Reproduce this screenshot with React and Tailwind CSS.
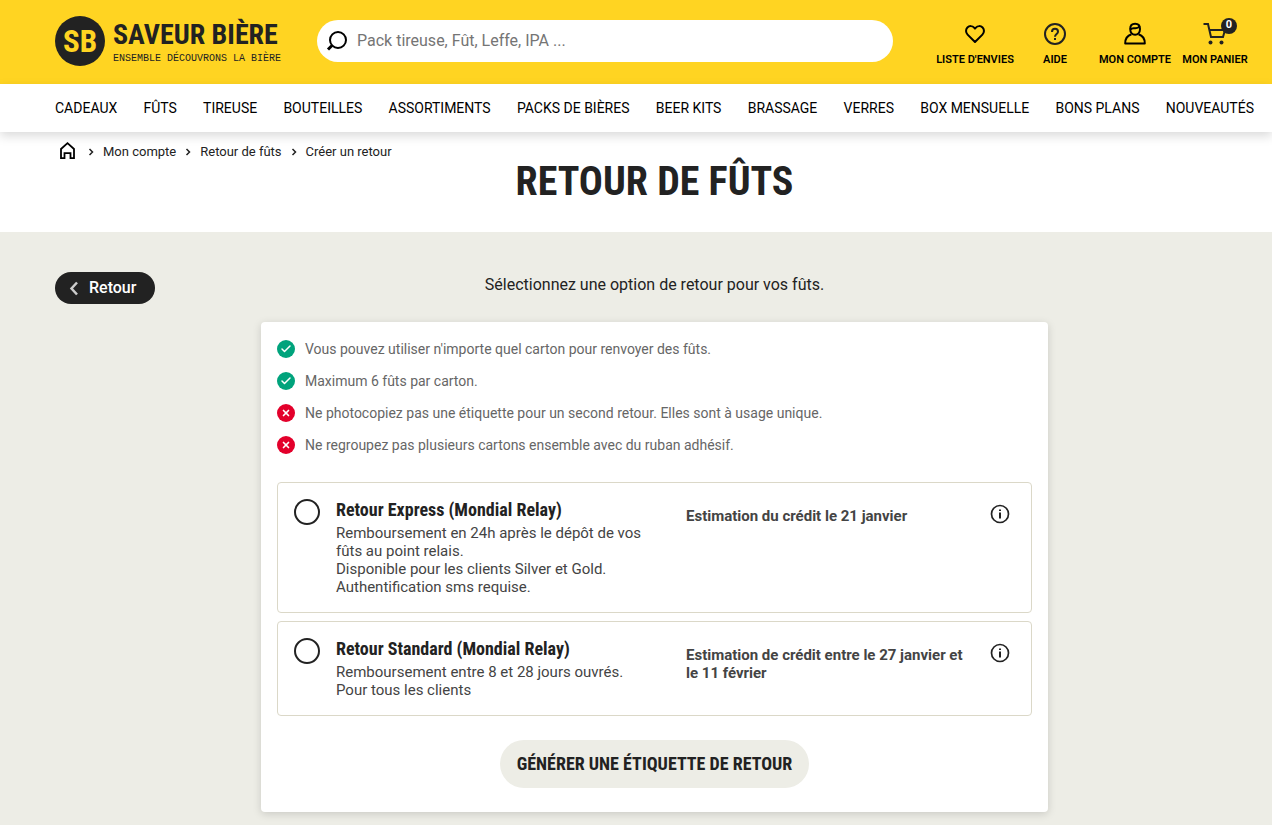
import { useState } from "react";
import { Check, X } from "lucide-react";

const menu = [
  "Cadeaux", "Fûts", "Tireuse", "Bouteilles", "Assortiments", "Packs de bières",
  "Beer kits", "Brassage", "Verres", "Box mensuelle", "Bons plans", "Nouveautés",
];

const rules = [
  { ok: true, text: "Vous pouvez utiliser n'importe quel carton pour renvoyer des fûts." },
  { ok: true, text: "Maximum 6 fûts par carton." },
  { ok: false, text: "Ne photocopiez pas une étiquette pour un second retour. Elles sont à usage unique." },
  { ok: false, text: "Ne regroupez pas plusieurs cartons ensemble avec du ruban adhésif." },
];

const options = [
  {
    id: "express",
    title: "Retour Express (Mondial Relay)",
    lines: [
      "Remboursement en 24h après le dépôt de vos fûts au point relais.",
      "Disponible pour les clients Silver et Gold.",
      "Authentification sms requise.",
    ],
    estimate: "Estimation du crédit le 21 janvier",
  },
  {
    id: "standard",
    title: "Retour Standard (Mondial Relay)",
    lines: ["Remboursement entre 8 et 28 jours ouvrés.", "Pour tous les clients"],
    estimate: "Estimation de crédit entre le 27 janvier et le 11 février",
  },
];

function HeartIcon() {
  return (
    <svg width="24" height="24" viewBox="0 0 24 24" fill="none" stroke="black" strokeWidth="2" strokeLinejoin="round">
      <path d="M12 20 4.600 12.600C2.600 10.600 2.500 7.400 4.400 5.500c1.900-1.900 5-1.800 6.700.1l.9 1 .9-1c1.700-1.900 4.800-2 6.700-.1 1.900 1.900 1.800 5.100-.2 7.100Z" />
    </svg>
  );
}

function HelpIcon() {
  return (
    <svg width="24" height="24" viewBox="0 0 24 24" fill="none" stroke="#222" strokeWidth="2">
      <circle cx="12" cy="12" r="10" />
      <path d="M9 10c0-2 1.300-3.200 3-3.200s3 1.200 3 2.900c0 2.200-3 2.500-3 5.100M12 16v2" />
    </svg>
  );
}

function UserIcon() {
  return (
    <svg width="24" height="24" viewBox="0 0 24 24" fill="none" stroke="black" strokeWidth="2" strokeLinejoin="round">
      <path d="M7.200 7c0-3.400 2-5.200 4.900-5.200S17 3.700 17 7s-2 5.800-4.900 5.800S7.200 10.300 7.200 7Z" />
      <path d="M7.300 7.500c1.600-1.700 3-1.300 4.700-1.200 1.900.1 3.300-.1 4.500-2" />
      <path d="M8.500 12.300C4.500 13.500 2.200 16 2.200 21.500h19.600c0-5.500-2.300-8-6.300-9.200" />
    </svg>
  );
}

function CartIcon() {
  return (
    <svg width="24" height="24" viewBox="0 0 24 24" fill="none" stroke="#222" strokeWidth="2">
      <path d="M.5 2H5l3 13h12L22 8H6.500" />
      <circle cx="7.500" cy="20.500" r="2" fill="#222" stroke="none" />
      <circle cx="18.500" cy="20.500" r="2" fill="#222" stroke="none" />
    </svg>
  );
}

function Chevron() {
  return (
    <svg className="mx-[9px]" width="6" height="8" viewBox="0 0 6 8" fill="none" stroke="#222" strokeWidth="1.500">
      <path d="m1.500 1 3 3-3 3" />
    </svg>
  );
}

function HeaderLink({ icon, label, badge }) {
  return (
    <a href="#" className="flex w-20 flex-col items-center gap-2 text-black">
      <span className="relative">
        {icon}
        {badge && (
          <span className="absolute -top-1 -right-[10px] flex size-4 items-center justify-center rounded-full bg-[#222] text-[11px] font-bold text-white">
            {badge}
          </span>
        )}
      </span>
      <span className="text-[11px] leading-3 font-semibold whitespace-nowrap uppercase">{label}</span>
    </a>
  );
}

function Logo() {
  return (
    <a href="#" aria-label="Saveur Bière" className="flex shrink-0 items-center gap-2 text-[#222]">
      <svg width="50" height="50" viewBox="0 0 50 50">
        <circle cx="25" cy="25" r="25" fill="#222" />
        <text x="25" y="36" textAnchor="middle" fontSize="31" fontWeight="700" fill="#ffd422" className="font-['Roboto_Condensed','Roboto',sans-serif]">
          SB
        </text>
      </svg>
      <span className="flex flex-col">
        <span className="font-['Roboto_Condensed','Roboto',sans-serif] text-[28px] leading-9 font-bold">SAVEUR BIÈRE</span>
        <span className="font-['Liberation_Mono',monospace] text-[10px] leading-3">ENSEMBLE DÉCOUVRONS LA BIÈRE</span>
      </span>
    </a>
  );
}

function ReturnOption({ option, checked, onChange }) {
  return (
    <div className="grid grid-cols-[26px_167fr_144fr_20px] gap-x-4 rounded border border-[#dbd8c8] py-4 pr-[21px] pl-4">
      <input
        type="radio"
        id={option.id}
        name="return-option"
        checked={checked}
        onChange={onChange}
        className="size-[26px] appearance-none rounded-full border-2 border-[#222] checked:border-8"
      />
      <label htmlFor={option.id} className="pr-4">
        <span className="mb-[3px] block font-['Roboto_Condensed','Roboto',sans-serif] text-lg leading-[22px] font-bold text-[#222]">
          {option.title}
        </span>
        {option.lines.map((line) => (
          <span key={line} className="block text-[15px] leading-[18px] text-[#444]">{line}</span>
        ))}
      </label>
      <p className="pt-2 text-[15px] leading-[18px] font-bold text-[#444]">{option.estimate}</p>
      <button type="button" aria-label="Informations" className="mt-[5px] size-5">
        <svg width="20" height="20" viewBox="0 0 20 20" fill="none" stroke="#222">
          <circle cx="10" cy="10" r="8.500" strokeWidth="1.700" />
          <path d="M10 8.500V14.500M10 5.500v1.500" strokeWidth="2" />
        </svg>
      </button>
    </div>
  );
}

export default function App() {
  const [selected, setSelected] = useState(null);

  return (
    <div className="flex min-h-screen flex-col bg-white font-['Roboto',sans-serif] text-[#222]">
      <header className="flex h-[84px] items-center bg-[#ffd422] pr-[17px] pb-[2px] pl-[55px]">
        <Logo />
        <label className="mr-[42px] ml-auto flex h-[42px] w-[576px] items-center gap-2 rounded-full bg-white px-2">
          <svg width="24" height="24" viewBox="0 0 24 24" fill="none" stroke="black" strokeWidth="2">
            <circle cx="13" cy="11" r="8" />
            <path d="m7 16.500-4 4" strokeWidth="3" />
          </svg>
          <input
            type="search"
            aria-label="Rechercher"
            placeholder="Pack tireuse, Fût, Leffe, IPA ..."
            className="min-w-0 flex-1 text-base outline-none placeholder:text-[#757575]"
          />
        </label>
        <div className="flex pt-[5px]">
          <HeaderLink icon={<HeartIcon />} label="Liste d'envies" />
          <HeaderLink icon={<HelpIcon />} label="Aide" />
          <HeaderLink icon={<UserIcon />} label="Mon compte" />
          <HeaderLink icon={<CartIcon />} label="Mon panier" badge="0" />
        </div>
      </header>

      <nav className="relative flex h-12 items-center justify-between bg-white pr-[18px] pl-[55px] text-sm whitespace-nowrap text-black uppercase shadow-[0_4px_10px_rgba(0,0,0,0.15)]">
        {menu.map((item) => (
          <a key={item} href="#">{item}</a>
        ))}
      </nav>

      <div className="grid h-[100px] grid-cols-[1fr_auto_1fr] pr-[18px] pl-[55px]">
        <nav aria-label="Fil d'Ariane" className="mt-2 flex h-6 items-center text-[13px]">
          <a href="#" aria-label="Accueil">
            <svg width="24" height="24" viewBox="0 0 24 24" fill="none" stroke="black" strokeWidth="1.800">
              <path d="M6 9 12.500 3.200 19 9v9.200h-3.500v-5h-6v5H6Z" />
            </svg>
          </a>
          <Chevron />
          <a href="#">Mon compte</a>
          <Chevron />
          <a href="#">Retour de fûts</a>
          <Chevron />
          <span>Créer un retour</span>
        </nav>
        <h1 className="self-center font-['Roboto_Condensed','Roboto',sans-serif] text-[40px] leading-[50px] font-bold uppercase">
          Retour de fûts
        </h1>
      </div>

      <main className="flex-1 bg-[#edede6] pt-10 pr-[18px] pb-[13px] pl-[55px]">
        <div className="grid h-[50px] grid-cols-[1fr_auto_1fr] items-start">
          <button type="button" className="flex h-8 w-[100px] items-center gap-1 justify-self-start rounded-full bg-[#222] pl-3 font-medium text-white">
            <svg width="18" height="18" viewBox="0 0 18 18" fill="none" stroke="#ccc" strokeWidth="2.500">
              <path d="m10 3.500-5.500 6 5.500 6" />
            </svg>
            Retour
          </button>
          <p className="leading-[26px]">Sélectionnez une option de retour pour vos fûts.</p>
        </div>

        <section className="mx-auto flex max-w-[787px] flex-col rounded bg-white px-4 pt-[11px] pb-6 shadow-[0_2px_8px_rgba(0,0,0,0.15)]">
          <ul className="mb-[21px] text-sm text-[#666]">
            {rules.map((rule) => (
              <li key={rule.text} className="flex h-8 items-center gap-[10px]">
                {rule.ok ? (
                  <span className="flex size-[18px] items-center justify-center rounded-full bg-[#00a37c] text-white">
                    <Check size={12} strokeWidth={3} />
                  </span>
                ) : (
                  <span className="flex size-[18px] items-center justify-center rounded-full bg-[#e3002b] text-white">
                    <X size={10} strokeWidth={4} />
                  </span>
                )}
                {rule.text}
              </li>
            ))}
          </ul>
          <div className="mb-6 flex flex-col gap-2">
            {options.map((option) => (
              <ReturnOption
                key={option.id}
                option={option}
                checked={selected === option.id}
                onChange={() => setSelected(option.id)}
              />
            ))}
          </div>
          <button type="button" className="h-12 self-center rounded-full bg-[#edede6] px-[17px] font-['Roboto_Condensed','Roboto',sans-serif] text-lg font-bold uppercase">
            Générer une étiquette de retour
          </button>
        </section>
      </main>
    </div>
  );
}
